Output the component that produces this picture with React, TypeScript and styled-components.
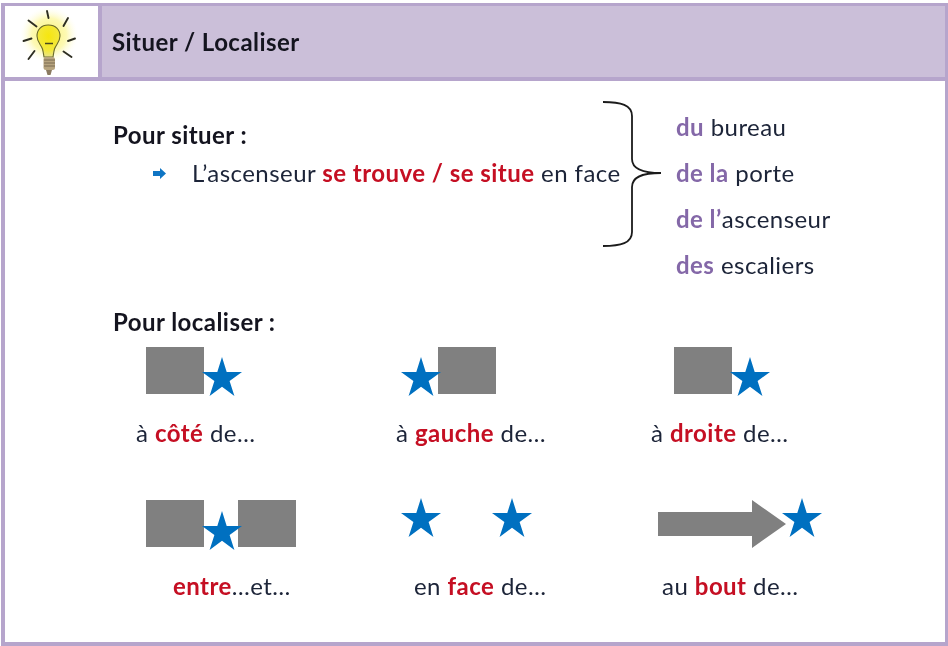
import { FC } from 'react'
import styled, { createGlobalStyle } from 'styled-components'

const GlobalStyle = createGlobalStyle`
  html, body {
    margin: 0;
    padding: 0;
    background: #fff;
  }

  body {
    font-family: Lato, "Open Sans", sans-serif;
    font-size: 24px;
    letter-spacing: 0.45px;
    color: #1c2438;
  }
`

const Frame = styled.div`
  box-sizing: border-box;
  width: 948px;
  height: 643px;
  margin: 3px 0 0 1px;
  border: 4px solid #b6a5cc;
  border-top-width: 3px;
  overflow: hidden;
  filter: blur(0.35px);
`

const Header = styled.header`
  display: flex;
  height: 71px;
  background: #cbbfd9;
  border-bottom: 4px solid #b6a5cc;
`

const IconCell = styled.div`
  display: flex;
  width: 93px;
  background: #fff;
  border-right: 4px solid #b6a5cc;
`

const Title = styled.h1`
  margin: 0 0 0 10px;
  align-self: center;
  font-size: 24px;
  font-weight: 700;
  color: #14141f;
`

const Main = styled.main`
  padding: 20px 0 0 108px;
`

const SituerRow = styled.section`
  display: flex;
  height: 192px;
`

const SituerText = styled.div`
  width: 490px;
  flex: none;
  padding-top: 20px;
`

const Heading = styled.h2`
  margin: 0;
  font-size: 24px;
  line-height: 28px;
  font-weight: 700;
  color: #14141f;
`

const Sentence = styled.p`
  display: flex;
  align-items: center;
  margin: 10px 0 0 40px;
  line-height: 28px;
  white-space: nowrap;
`

const Bullet = styled.svg`
  flex: none;
  width: 13px;
  height: 11px;
  margin-right: 26px;
`

const Brace = styled.svg`
  width: 60px;
  height: 146px;
  flex: none;
`

const EndingList = styled.ul`
  list-style: none;
  margin: 3px 0 0 13px;
  padding: 0;
  line-height: 46px;
`

const Red = styled.b`
  color: #c50f23;
`

const Purple = styled.b`
  color: #8468a8;
`

const LocaliserHeading = styled(Heading)`
  margin-top: 15px;
`

const Diagrams = styled.div`
  display: grid;
  grid-template-columns: 255px 257px 1fr;
  grid-template-rows: 153px 1fr;
  margin: 11px 0 0 33px;
`

const Diagram = styled.div`
  display: flex;
  flex-direction: column;
`

const Figure = styled.div<{ $offset?: number }>`
  display: flex;
  align-items: flex-start;
  height: 50px;
  margin-left: ${({ $offset = 0 }) => $offset}px;
`

const Block = styled.div`
  flex: none;
  width: 58px;
  height: 47px;
  background: #808080;
`

const StarIcon = styled.svg<{ $top: number; $left: number; $right: number }>`
  flex: none;
  position: relative;
  z-index: 1;
  width: 40px;
  height: 39px;
  margin: ${({ $top, $right, $left }) => `${$top}px ${$right}px 0 ${$left}px`};
`

const ArrowIcon = styled.svg`
  flex: none;
  width: 128px;
  height: 48px;
`

const Caption = styled.p<{ $indent: number }>`
  margin: 22px 0 0 ${({ $indent }) => $indent}px;
  line-height: 28px;
  white-space: nowrap;
`

const Star: FC<{ top?: number; left?: number; right?: number }> = ({ top = 10, left = 0, right = 0 }) => (
  <StarIcon $top={top} $left={left} $right={right} viewBox="0 0 40 39">
    <polygon
      fill="#0070c0"
      points="20,0 24.7,14.9 40,14.9 27.6,24.1 32.4,39 20,29.8 7.6,39 12.4,24.1 0,14.9 15.3,14.9"
    />
  </StarIcon>
)

const Bulb: FC = () => (
  <svg width="93" height="71" viewBox="5 6 93 71">
    <defs>
      <radialGradient id="glow">
        <stop offset="0%" stopColor="#fbf37a" />
        <stop offset="60%" stopColor="#fdf9b4" />
        <stop offset="100%" stopColor="#fffef0" stopOpacity="0" />
      </radialGradient>
      <radialGradient id="glass" cx="50%" cy="35%" r="65%">
        <stop offset="0%" stopColor="#f6e60f" />
        <stop offset="70%" stopColor="#f3e83c" />
        <stop offset="100%" stopColor="#e9e38a" />
      </radialGradient>
    </defs>
    <ellipse cx="49" cy="35" rx="29" ry="28" fill="url(#glow)" />
    <path
      d="M48 25c-6.500 0-11 4.500-11 11 0 6 4 8.500 5.500 13 .6 2 1 5 1.500 8h9c.5-3 .9-6 1.500-8 1.500-4.500 5.500-7 5.500-13 0-6.500-4.500-11-11.500-11z"
      fill="url(#glass)"
      stroke="#6a6a2a"
      strokeWidth="1.1"
    />
    <path d="M45 43.500h8" stroke="#4a4820" strokeWidth="1.500" />
    <rect x="43.500" y="57" width="11.500" height="13" rx="2.500" fill="#b7a47e" />
    <path d="M44 60h11M44 63h11M44 66h11" stroke="#7a6a50" strokeWidth="1" />
    <path d="M46 70h6l-1.500 5h-3z" fill="#8a7a60" />
    <g stroke="#2e2e22" strokeWidth="1.900" strokeLinecap="round" fill="none">
      <path d="M47 11l1.500 7" />
      <path d="M68 18l-4.500 8" />
      <path d="M28.500 20.500l8 6" />
      <path d="M23.500 41l8-2.500" />
      <path d="M68 41l7-2.500" />
      <path d="M28.500 59l6-8" />
      <path d="M71.500 57l-8-5.500" />
    </g>
  </svg>
)

export default function App() {
  return (
    <>
      <GlobalStyle />
      <Frame>
        <Header>
          <IconCell>
            <Bulb />
          </IconCell>
          <Title>Situer / Localiser</Title>
        </Header>
        <Main>
          <SituerRow>
            <SituerText>
              <Heading>Pour situer :</Heading>
              <Sentence>
                <Bullet viewBox="0 0 13 11">
                  <path fill="#0f75c4" d="M0 3h7V0l6 5.500L7 11V8H0z" />
                </Bullet>
                <span>
                  L’ascenseur <Red>se trouve / se situe</Red> en face
                </span>
              </Sentence>
            </SituerText>
            <Brace viewBox="0 0 60 146" fill="none">
              <path
                d="M0 1c18 0 29 3 29 14v43c0 9 8 14 29 14-21 0-29 5-29 14v45c0 11-11 14-29 14"
                stroke="#1b1b1b"
                strokeWidth="1.800"
              />
            </Brace>
            <EndingList>
              <li>
                <Purple>du</Purple> bureau
              </li>
              <li>
                <Purple>de la</Purple> porte
              </li>
              <li>
                <Purple>de l’</Purple>ascenseur
              </li>
              <li>
                <Purple>des</Purple> escaliers
              </li>
            </EndingList>
          </SituerRow>
          <LocaliserHeading>Pour localiser :</LocaliserHeading>
          <Diagrams>
            <Diagram>
              <Figure>
                <Block />
                <Star left={-2} />
              </Figure>
              <Caption $indent={-10}>
                à <Red>côté</Red> de…
              </Caption>
            </Diagram>
            <Diagram>
              <Figure>
                <Star right={-3} />
                <Block />
              </Figure>
              <Caption $indent={-5}>
                à <Red>gauche</Red> de…
              </Caption>
            </Diagram>
            <Diagram>
              <Figure $offset={16}>
                <Block />
                <Star left={-2} />
              </Figure>
              <Caption $indent={-7}>
                à <Red>droite</Red> de…
              </Caption>
            </Diagram>
            <Diagram>
              <Figure>
                <Block />
                <Star left={-2} right={-4} top={11} />
                <Block />
              </Figure>
              <Caption $indent={27}>
                <Red>entre</Red>…et…
              </Caption>
            </Diagram>
            <Diagram>
              <Figure>
                <Star top={-2} />
                <Star top={-2} left={51} />
              </Figure>
              <Caption $indent={13}>
                en <Red>face</Red> de…
              </Caption>
            </Diagram>
            <Diagram>
              <Figure>
                <ArrowIcon viewBox="0 0 128 48">
                  <path fill="#808080" d="M0 12h94V0l34 24-34 24V36H0z" />
                </ArrowIcon>
                <Star top={-2} left={-4} />
              </Figure>
              <Caption $indent={4}>
                au <Red>bout</Red> de…
              </Caption>
            </Diagram>
          </Diagrams>
        </Main>
      </Frame>
    </>
  )
}
